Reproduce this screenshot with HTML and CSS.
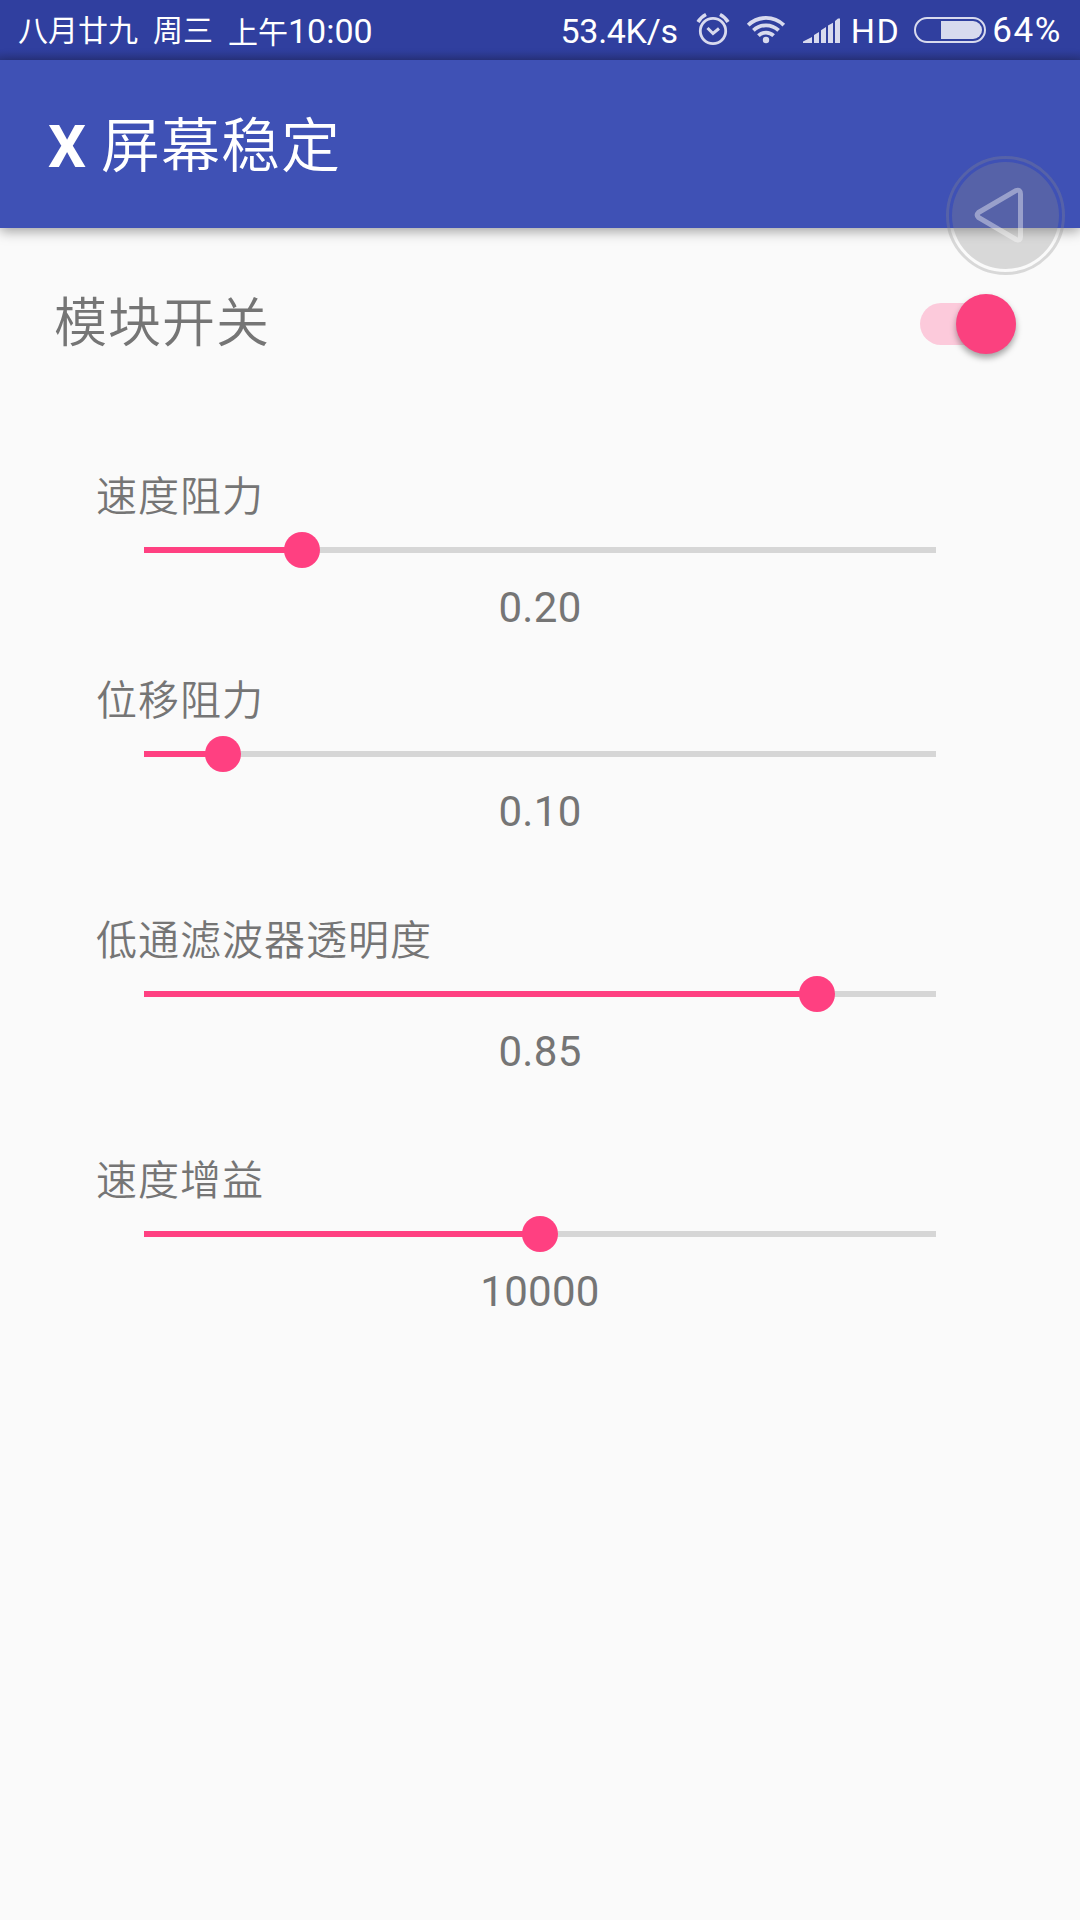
FILE: index.html
```
<!DOCTYPE html>
<html lang="zh-CN">
  <head>
    <meta charset="utf-8">
    <title>X 屏幕稳定</title>
    <meta name="viewport" content="width=device-width, initial-scale=1">
    <link rel="stylesheet" href="styles.css">
  </head>
  <body>
    <div class="statusbar">
      <div class="date"><span>八月廿九</span><span>周三</span><span>上午<b>10:00</b></span></div>
      <div class="status">
        <span class="speed">53.4K/s</span>
        <svg class="alarm" width="34" height="34" viewBox="0 0 34 34" fill="none" stroke="#d8daee">
          <circle cx="17" cy="19" r="12.7" stroke-width="2.8" />
          <path d="M11.5 16L17 21.5L23 16.5" stroke-width="3" />
          <path d="M2 10Q5 5 10 2.5M24 2.5Q29 5 32 10" stroke-width="3.6" />
        </svg>
        <svg class="wifi" width="40" height="30" viewBox="0 0 40 30" fill="none" stroke="#d8daee" stroke-width="3.8">
          <path d="M2.2 11.2A25.5 25.5 0 0 1 37.8 11.2" />
          <path d="M7.4 16.4A18.2 18.2 0 0 1 32.6 16.4" />
          <path d="M12.4 21.6A11 11 0 0 1 27.6 21.6" />
          <circle cx="20" cy="26" r="3.2" fill="#d8daee" stroke="none" />
        </svg>
        <svg class="signal" width="38" height="26" viewBox="0 0 38 26" fill="#d8daee">
          <path d="M0 25V23.6L9 19V25ZM11 25V17L16 14V25ZM18 25V12.2L23 9V25ZM25 25V7.5L30 4.8V25ZM32 25V3L35 0.5H37V25Z" />
        </svg>
        <span class="hd">HD</span>
        <svg class="battery" width="72" height="26" viewBox="0 0 72 26">
          <rect x="1" y="1" width="70" height="24" rx="12" fill="none" stroke="#d8daee" stroke-width="2" />
          <path d="M27 4H59A9 9 0 0 1 59 22H27Z" fill="#d8daee" />
        </svg>
        <span class="percent">64%</span>
      </div>
    </div>

    <header>
      <h1><b>X</b> <span>屏幕稳定</span></h1>
    </header>

    <div class="module">
      <span>模块开关</span>
      <div class="switch"><div class="knob"></div></div>
    </div>

    <ul class="settings">
      <li>
        <div class="title">速度阻力</div>
        <div class="seek"><div class="progress" style="width:20%"></div></div>
        <div class="value">0.20</div>
      </li>
      <li>
        <div class="title">位移阻力</div>
        <div class="seek"><div class="progress" style="width:10%"></div></div>
        <div class="value">0.10</div>
      </li>
      <li class="spaced">
        <div class="title">低通滤波器透明度</div>
        <div class="seek"><div class="progress" style="width:85%"></div></div>
        <div class="value">0.85</div>
      </li>
      <li class="spaced">
        <div class="title">速度增益</div>
        <div class="seek"><div class="progress" style="width:50%"></div></div>
        <div class="value">10000</div>
      </li>
    </ul>

    <!-- floating back button -->
    <svg class="back" width="119" height="119" viewBox="0.5 0.5 119 119" fill="none">
      <circle cx="60" cy="60" r="53.5" fill="#8c8c8c" fill-opacity=".3" />
      <circle cx="60" cy="60" r="58" stroke="#8c8c8c" stroke-opacity=".3" stroke-width="3" />
      <path d="M33 57L70.500 35Q75 33.500 75 38.500V81Q75 86 70.500 84L33 62Q30.500 59.500 33 57Z" stroke="#fff" stroke-opacity=".4" stroke-width="5" />
    </svg>
  </body>
</html>
```
FILE: styles.css
```
body {
  margin: 0;
  height: 1920px;
  overflow: hidden;
  background: #fafafa;
  color: #757575;
  font-family: Roboto, "Noto Sans CJK SC", sans-serif;
}
.statusbar {
  display: flex;
  justify-content: space-between;
  height: 60px;
  padding: 0 18px;
  box-sizing: border-box;
  background: linear-gradient(#303f9f 50px, #2b3788);
  color: #fff;
  font-size: 34px;
  line-height: 62px;
  white-space: nowrap;
}
.date {
  display: flex;
  gap: 15px;
  font-size: 30px;
}
.date b {
  font-size: 34px;
  font-weight: normal;
}
.status {
  display: flex;
}
.speed {
  margin-right: 18px;
  letter-spacing: -.3px;
}
.alarm {
  margin: 12px 16px 0 0;
}
.wifi {
  margin: 14px 17px 0 0;
}
.signal {
  margin: 18px 10px 0 0;
}
.hd {
  margin-right: 14px;
  letter-spacing: 1.5px;
}
.battery {
  margin: 17px 6px 0 0;
}
.percent {
  font-size: 35px;
  letter-spacing: 1.6px;
}
header {
  height: 168px;
  padding: 0 48px;
  background: #3f51b5;
  box-shadow: 0 3px 12px rgba(0, 0, 0, .38);
}
h1 {
  margin: 0;
  color: #fff;
  font-size: 60px;
  font-weight: normal;
  line-height: 174px;
}
h1 span {
  font-size: 59px;
  font-weight: 350;
  letter-spacing: 1px;
}
.module {
  display: flex;
  justify-content: space-between;
  align-items: center;
  height: 191px;
  padding: 0 64px 0 54px;
  font-size: 53px;
  font-weight: 350;
  letter-spacing: 1px;
}
.module span {
  padding-bottom: 10px;
}
.switch {
  display: flex;
  justify-content: flex-end;
  align-items: center;
  width: 96px;
  height: 42px;
  border-radius: 21px;
  background: #fccadb;
}
.knob {
  flex: none;
  width: 60px;
  height: 60px;
  border-radius: 50%;
  background: #fb417f;
  box-shadow: 0 4px 6px rgba(0, 0, 0, .35);
}
.settings {
  margin: 0;
  padding: 47px 96px 0;
  list-style: none;
  font-size: 42px;
}
.settings li {
  height: 204px;
}
.settings li.spaced {
  padding-top: 36px;
}
.title {
  height: 66px;
  font-size: 41px;
  font-weight: 350;
  letter-spacing: 1px;
  line-height: 63px;
}
.seek {
  display: flex;
  align-items: center;
  height: 36px;
  margin: 0 48px;
  background: linear-gradient(#d6d6d6, #d6d6d6) center / 100% 6px no-repeat;
}
.progress {
  display: flex;
  justify-content: flex-end;
  align-items: center;
  height: 6px;
  background: #ff4081;
}
.progress::after {
  content: "";
  flex: none;
  width: 36px;
  height: 36px;
  margin-right: -18px;
  border-radius: 50%;
  background: #ff4081;
}
.value {
  letter-spacing: .3px;
  line-height: 80px;
  text-align: center;
}
.back {
  position: absolute;
  left: 946px;
  top: 156px;
}
```
